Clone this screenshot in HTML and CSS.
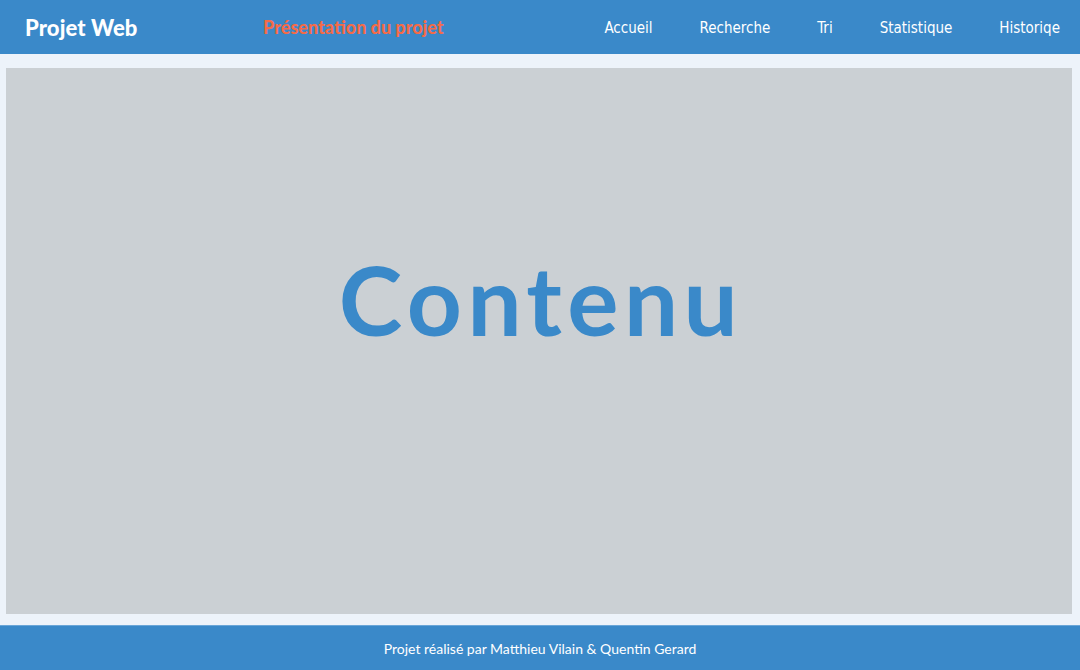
FILE: index.html
```html
<!DOCTYPE html>
<html lang="fr">
<head>
<meta charset="utf-8">
<title>Projet Web</title>
<link rel="stylesheet" href="styles.css">
</head>
<body>
<div class="page">
  <header class="topbar">
    <div class="brand">Projet Web</div>
    <div class="subtitle">Présentation du projet</div>
    <nav class="nav">
      <a class="nav-link" href="#">Accueil</a>
      <a class="nav-link" href="#">Recherche</a>
      <a class="nav-link" href="#">Tri</a>
      <a class="nav-link" href="#">Statistique</a>
      <a class="nav-link" href="#">Historiqe</a>
    </nav>
  </header>
  <main class="main">
    <section class="content">
      <h1 class="content-title">Contenu</h1>
    </section>
  </main>
  <footer class="footer">Projet réalisé par Matthieu Vilain &amp; Quentin Gerard</footer>
</div>
</body>
</html>
```

FILE: styles.css
```css
html, body {
  margin: 0;
  padding: 0;
  height: 100%;
}
body {
  background: #edf3fa;
  font-family: "Lato", "Liberation Sans", sans-serif;
}
.page {
  display: flex;
  flex-direction: column;
  height: 100vh;
}
.topbar {
  height: 54px;
  flex: none;
  background: #3a89c9;
  display: flex;
  align-items: center;
  padding: 0 20px 0 25px;
  box-sizing: border-box;
}
.brand {
  color: #ffffff;
  font-family: "Lato", sans-serif;
  font-weight: 900;
  font-size: 22px;
  width: 238px;
  letter-spacing: 0.1px;
}
.subtitle {
  color: #f46b48;
  font-family: "Lato", sans-serif;
  font-weight: 900;
  font-size: 18px;
  margin-top: -1px;
}
.nav {
  margin-left: auto;
  display: flex;
  gap: 47px;
  margin-top: 1px;
}
.nav-link {
  color: #ffffff;
  text-decoration: none;
  font-family: "DejaVu Sans Condensed", "DejaVu Sans", sans-serif;
  font-size: 15px;
}
.main {
  flex: 1;
  padding: 14px 8px 11px 6px;
  display: flex;
  min-height: 0;
}
.content {
  flex: 1;
  background: #cbd0d4;
  display: flex;
  align-items: center;
  justify-content: center;
}
.content-title {
  margin: 0 0 86px 4px;
  color: #3a89c9;
  font-family: "Lato", sans-serif;
  font-weight: 700;
  font-size: 96px;
  letter-spacing: 5.5px;
}
.footer {
  flex: none;
  height: 45px;
  box-sizing: border-box;
  background: #3a89c9;
  border-top: 1px solid #6aa6d8;
  color: #ffffff;
  font-family: "Lato", sans-serif;
  font-size: 14px;
  display: flex;
  align-items: center;
  justify-content: center;
}
```
